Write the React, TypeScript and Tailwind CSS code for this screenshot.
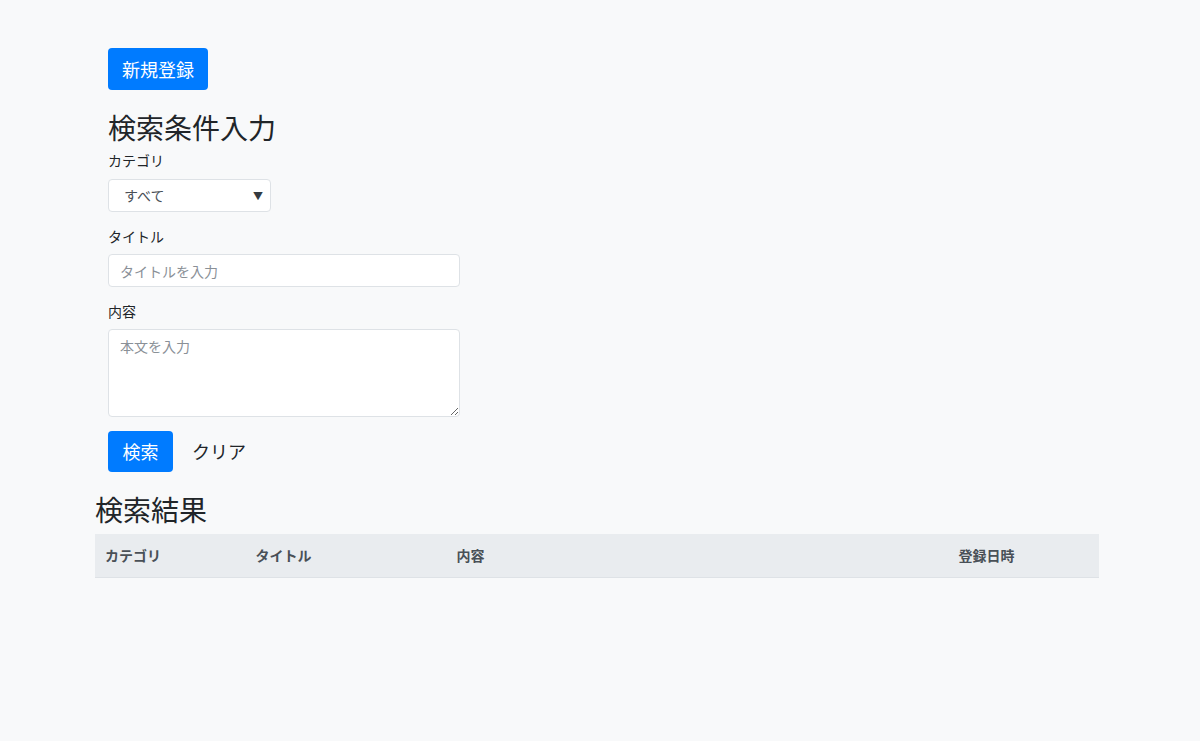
import React, { useState } from "react";

const font = { fontFamily: '"Noto Sans CJK JP", "Noto Sans", sans-serif' };

const App = () => {
  const [category, setCategory] = useState("all");
  const [title, setTitle] = useState("");
  const [body, setBody] = useState("");

  const clear = () => {
    setCategory("all");
    setTitle("");
    setBody("");
  };

  return (
    <div className="min-h-[741px] bg-[#f8f9fa] text-[#212529]" style={font}>
      <div className="ml-[95px] w-[1004px] pt-[48px]">
        <div className="px-[13px]">
          <button className="h-[42px] w-[100px] rounded-[4px] bg-[#007bff] text-[18px] text-white">
            新規登録
          </button>

          <h2 className="mt-[20px] text-[28px] leading-[34px]">検索条件入力</h2>

          <form onSubmit={(e) => e.preventDefault()}>
            <label className="mt-[6px] block text-[14px] leading-[21px]">カテゴリ</label>
            <div className="relative mt-[8px] w-[163px]">
              <select
                value={category}
                onChange={(e) => setCategory(e.target.value)}
                className="h-[33px] w-full appearance-none rounded-[4px] border border-[#dee2e6] bg-white pl-[15px] text-[14px] text-[#495057]"
              >
                <option value="all">すべて</option>
              </select>
              <span className="pointer-events-none absolute right-[8px] top-[9px] text-[10px] text-[#343a40]">▼</span>
            </div>

            <label className="mt-[14px] block text-[14px] leading-[21px]">タイトル</label>
            <input
              value={title}
              onChange={(e) => setTitle(e.target.value)}
              placeholder="タイトルを入力"
              className="mt-[7px] block h-[33px] w-[352px] rounded-[4px] border border-[#dee2e6] bg-white px-[11px] text-[14px] placeholder:text-[#8a9097]"
            />

            <label className="mt-[14px] block text-[14px] leading-[21px]">内容</label>
            <textarea
              value={body}
              onChange={(e) => setBody(e.target.value)}
              placeholder="本文を入力"
              className="mt-[7px] block h-[88px] w-[352px] rounded-[4px] border border-[#dee2e6] bg-white px-[11px] py-[6px] text-[14px] placeholder:text-[#8a9097]"
            />

            <div className="mt-[14px] flex items-center gap-[6px]">
              <button type="submit" className="h-[41px] w-[65px] rounded-[4px] bg-[#007bff] text-[18px] text-white">
                検索
              </button>
              <button type="button" onClick={clear} className="h-[41px] px-[13px] text-[18px]">
                クリア
              </button>
            </div>
          </form>
        </div>

        <h2 className="mt-[20px] text-[28px] leading-[34px]">検索結果</h2>

        <table className="mt-[8px] w-full table-fixed border-collapse text-left text-[14px]">
          <thead>
            <tr className="h-[43px] border-b border-[#dee2e6] bg-[#e9ecef] text-[#495057]">
              <th className="w-[15%] pl-[10px] font-bold">カテゴリ</th>
              <th className="w-[20%] pl-[10px] font-bold">タイトル</th>
              <th className="w-[50%] pl-[10px] font-bold">内容</th>
              <th className="w-[15%] pl-[10px] font-bold">登録日時</th>
            </tr>
          </thead>
          <tbody></tbody>
        </table>
      </div>
    </div>
  );
};

export default App;
